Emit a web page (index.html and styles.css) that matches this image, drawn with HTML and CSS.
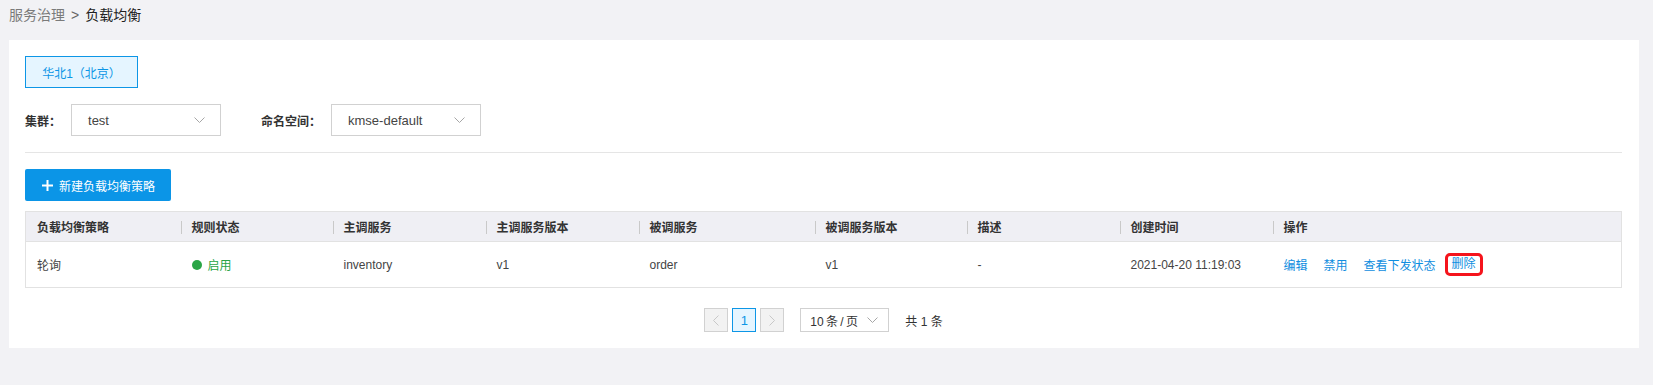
FILE: index.html
```html
<!DOCTYPE html>
<html lang="zh-CN">
<head>
    <meta charset="UTF-8">
    <title>负载均衡</title>
    <link rel="stylesheet" href="styles.css">
</head>
<body>
    <div class="page">
        <div class="crumb">
            <span class="crumb-parent">服务治理</span><span class="crumb-sep">&gt;</span><span class="crumb-current">负载均衡</span>
        </div>

        <div class="panel">
            <div class="regions">
                <button class="region active">华北1（北京）</button>
            </div>

            <div class="filters">
                <div class="filter">
                    <span class="filter-label">集群：</span>
                    <div class="select">
                        <span>test</span>
                        <svg class="caret" width="11" height="6" viewBox="0 0 11 6"><polyline points="0.5,0.5 5.5,5.5 10.5,0.5" fill="none" stroke="#a6a6a6" stroke-width="1"/></svg>
                    </div>
                </div>
                <div class="filter">
                    <span class="filter-label">命名空间：</span>
                    <div class="select">
                        <span>kmse-default</span>
                        <svg class="caret" width="11" height="6" viewBox="0 0 11 6"><polyline points="0.5,0.5 5.5,5.5 10.5,0.5" fill="none" stroke="#a6a6a6" stroke-width="1"/></svg>
                    </div>
                </div>
            </div>

            <div class="divider"></div>

            <button class="btn-primary">
                <svg width="11" height="11" viewBox="0 0 11 11"><path d="M5.5 0v11M0 5.5h11" stroke="#fff" stroke-width="2"/></svg>
                新建负载均衡策略
            </button>

            <table class="grid">
                <colgroup>
                    <col style="width:155px">
                    <col style="width:152px">
                    <col style="width:153px">
                    <col style="width:153px">
                    <col style="width:176px">
                    <col style="width:152px">
                    <col style="width:153px">
                    <col style="width:153px">
                    <col>
                </colgroup>
                <thead>
                    <tr>
                        <th>负载均衡策略</th>
                        <th>规则状态</th>
                        <th>主调服务</th>
                        <th>主调服务版本</th>
                        <th>被调服务</th>
                        <th>被调服务版本</th>
                        <th>描述</th>
                        <th>创建时间</th>
                        <th>操作</th>
                    </tr>
                </thead>
                <tbody>
                    <tr>
                        <td>轮询</td>
                        <td><span class="state on"><i class="dot"></i>启用</span></td>
                        <td>inventory</td>
                        <td>v1</td>
                        <td>order</td>
                        <td>v1</td>
                        <td>-</td>
                        <td>2021-04-20 11:19:03</td>
                        <td>
                            <div class="actions">
                                <a href="#">编辑</a>
                                <a href="#">禁用</a>
                                <a href="#">查看下发状态</a>
                                <a href="#" class="marked">删除</a>
                            </div>
                        </td>
                    </tr>
                </tbody>
            </table>

            <div class="pager">
                <button class="page-btn" disabled>
                    <svg width="6" height="11" viewBox="0 0 6 11"><polyline points="5.5,0.5 0.5,5.5 5.5,10.5" fill="none" stroke="#c8c8c8" stroke-width="1"/></svg>
                </button>
                <button class="page-btn current">1</button>
                <button class="page-btn" disabled>
                    <svg width="6" height="11" viewBox="0 0 6 11"><polyline points="0.5,0.5 5.5,5.5 0.5,10.5" fill="none" stroke="#c8c8c8" stroke-width="1"/></svg>
                </button>
                <div class="page-size">
                    <span>10 条 / 页</span>
                    <svg width="11" height="6" viewBox="0 0 11 6"><polyline points="0.5,0.5 5.5,5.5 10.5,0.5" fill="none" stroke="#a6a6a6" stroke-width="1"/></svg>
                </div>
                <span class="total">共 1 条</span>
            </div>
        </div>
    </div>
</body>
</html>
```

FILE: styles.css
```css
body {
    margin: 0;
    background: #f2f2f5;
    font-family: "Liberation Sans", "Noto Sans CJK SC", sans-serif;
    font-size: 12px;
    color: #333;
}
.page {
    padding: 0 14px 0 9px;
}
.crumb {
    height: 40px;
    line-height: 30px;
    font-size: 14px;
}
.crumb-parent {
    color: #7a7a7a;
}
.crumb-sep {
    color: #666;
    margin: 0 6px;
}
.crumb-current {
    color: #222;
}
.panel {
    background: #fff;
    padding: 16px 17px 16px 16px;
}
.regions {
    display: flex;
}
.region {
    width: 113px;
    height: 32px;
    font-family: inherit;
    font-size: 12px;
    background: #fff;
    border: 1px solid #ddd;
    color: #333;
    padding: 0;
}
.region.active {
    background: #e5f5ff;
    border-color: #0d96e6;
    color: #0d96e6;
}
.filters {
    display: flex;
    gap: 40px;
    margin-top: 16px;
}
.filter {
    display: flex;
    align-items: center;
    gap: 10px;
}
.filter-label {
    font-weight: bold;
    color: #333;
}
.select {
    box-sizing: border-box;
    width: 150px;
    height: 32px;
    border: 1px solid #d1d1d1;
    display: flex;
    align-items: center;
    justify-content: space-between;
    padding: 0 15px 0 16px;
    font-size: 13px;
    color: #444;
}
.divider {
    height: 1px;
    background: #e5e5e5;
    margin-top: 16px;
}
.btn-primary {
    margin-top: 16px;
    height: 32px;
    width: 146px;
    border: none;
    border-radius: 2px;
    background: #0b95e7;
    color: #fff;
    font-family: inherit;
    font-size: 12px;
    display: flex;
    align-items: center;
    gap: 6px;
    padding: 0 0 0 17px;
}
.grid {
    width: 100%;
    margin-top: 10px;
    border-collapse: collapse;
    table-layout: fixed;
    border: 1px solid #e2e2e2;
}
.grid th {
    height: 29px;
    background: #efeff4;
    border-bottom: 1px solid #e2e2e2;
    text-align: left;
    font-weight: bold;
    color: #333;
    padding: 0 11px;
    position: relative;
}
.grid th + th::before {
    content: "";
    position: absolute;
    left: 0;
    top: 9px;
    width: 1px;
    height: 13px;
    background: #c9c9c9;
}
.grid td {
    height: 45px;
    padding: 0 11px;
    color: #444;
    white-space: nowrap;
}
.state.on {
    color: #29a446;
    display: inline-flex;
    align-items: center;
    gap: 6px;
}
.state .dot {
    width: 10px;
    height: 10px;
    border-radius: 50%;
    background: #2aa546;
}
.actions {
    display: flex;
    align-items: center;
    gap: 16px;
}
.actions a {
    color: #0f8ee0;
    text-decoration: none;
}
.actions a.marked {
    line-height: 17px;
    padding: 0 4px;
    margin-left: -4px;
    outline: 3px solid #f5141c;
    border-radius: 2px;
}
.pager {
    display: flex;
    justify-content: center;
    align-items: center;
    margin-top: 20px;
}
.page-btn {
    box-sizing: border-box;
    width: 24px;
    height: 24px;
    padding: 0;
    margin-right: 4px;
    border: 1px solid #d1d1d1;
    background: #f2f2f2;
    display: flex;
    align-items: center;
    justify-content: center;
    font-family: inherit;
    font-size: 13px;
}
.page-btn.current {
    background: #e5f5ff;
    border-color: #0d96e6;
    color: #0d96e6;
}
.page-size {
    box-sizing: border-box;
    margin-left: 12px;
    width: 89px;
    height: 24px;
    border: 1px solid #d1d1d1;
    display: flex;
    align-items: center;
    justify-content: space-between;
    padding: 0 10px 0 9px;
    font-size: 12px;
    word-spacing: -1px;
    color: #333;
}
.total {
    margin-left: 16px;
    font-size: 12px;
    color: #333;
}
```
